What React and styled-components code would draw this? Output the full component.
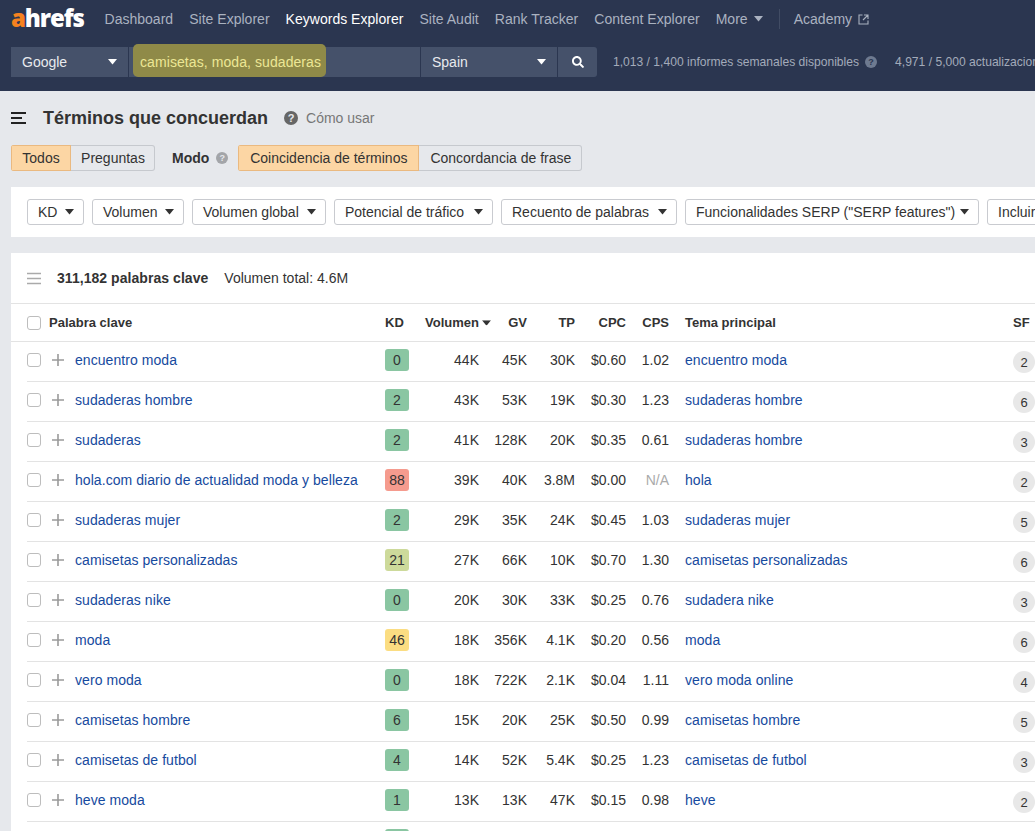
import styled, { createGlobalStyle } from "styled-components"
import { FaSearch } from "react-icons/fa"

const GlobalStyle = createGlobalStyle`
  html, body {
    margin: 0;
    height: 831px;
    overflow: hidden;
    background: #e6e8ec;
    font-family: "Liberation Sans", Arial, sans-serif;
    font-size: 14px;
    color: #333;
  }
  * { box-sizing: border-box; }
`

const navItems = [
  { label: "Dashboard" },
  { label: "Site Explorer" },
  { label: "Keywords Explorer", active: true },
  { label: "Site Audit" },
  { label: "Rank Tracker" },
  { label: "Content Explorer" },
]

const filters = [
  { name: "KD", width: 57 },
  { name: "Volumen", width: 92 },
  { name: "Volumen global", width: 134 },
  { name: "Potencial de tráfico", width: 159 },
  { name: "Recuento de palabras", width: 176 },
  { name: 'Funcionalidades SERP ("SERP features")', width: 294 },
]

const kdColors = {
  green: "#8ac6a2",
  lime: "#cdda9b",
  yellow: "#fbdd82",
  red: "#f59b8e",
}

const rows = [
  ["encuentro moda", 0, "green", "44K", "45K", "30K", "$0.60", "1.02", "encuentro moda", 2],
  ["sudaderas hombre", 2, "green", "43K", "53K", "19K", "$0.30", "1.23", "sudaderas hombre", 6],
  ["sudaderas", 2, "green", "41K", "128K", "20K", "$0.35", "0.61", "sudaderas hombre", 3],
  ["hola.com diario de actualidad moda y belleza", 88, "red", "39K", "40K", "3.8M", "$0.00", "N/A", "hola", 2],
  ["sudaderas mujer", 2, "green", "29K", "35K", "24K", "$0.45", "1.03", "sudaderas mujer", 5],
  ["camisetas personalizadas", 21, "lime", "27K", "66K", "10K", "$0.70", "1.30", "camisetas personalizadas", 6],
  ["sudaderas nike", 0, "green", "20K", "30K", "33K", "$0.25", "0.76", "sudadera nike", 3],
  ["moda", 46, "yellow", "18K", "356K", "4.1K", "$0.20", "0.56", "moda", 6],
  ["vero moda", 0, "green", "18K", "722K", "2.1K", "$0.04", "1.11", "vero moda online", 4],
  ["camisetas hombre", 6, "green", "15K", "20K", "25K", "$0.50", "0.99", "camisetas hombre", 5],
  ["camisetas de futbol", 4, "green", "14K", "52K", "5.4K", "$0.25", "1.23", "camisetas de futbol", 3],
  ["heve moda", 1, "green", "13K", "13K", "47K", "$0.15", "0.98", "heve", 2],
]

function Caret({ size = 9, color = "currentColor" }) {
  return (
    <svg width={size} height={size * 0.6} viewBox="0 0 10 6">
      <path d="M0 0h10L5 6z" fill={color} />
    </svg>
  )
}

function Plus() {
  return (
    <svg width="12" height="12" viewBox="0 0 12 12">
      <path d="M6 0v12M0 6h12" stroke="#9a9a9a" strokeWidth="1.6" />
    </svg>
  )
}

export default function App() {
  return (
    <>
      <GlobalStyle />
      <Header>
        <TopBar>
          <Logo><span>a</span>hrefs</Logo>
          <Nav>
            {navItems.map((item) => (
              <NavLink key={item.label} $active={item.active}>{item.label}</NavLink>
            ))}
            <NavLink>More <Caret size={9} /></NavLink>
            <NavDivider />
            <NavLink>
              Academy
              <svg width="11" height="11" viewBox="0 0 11 11" fill="none" stroke="currentColor" strokeWidth="1.1">
                <path d="M4.5 1H1v9h9V6.5M6 1h4v4M10 1L5 6" />
              </svg>
            </NavLink>
          </Nav>
        </TopBar>
        <SearchBar>
          <SelectBox $width={117}>
            Google <Caret size={9} color="#fff" />
          </SelectBox>
          <QueryBox>
            <Highlight>camisetas, moda, sudaderas</Highlight>
          </QueryBox>
          <SelectBox $width={136}>
            Spain <Caret size={9} color="#fff" />
          </SelectBox>
          <SearchButton><FaSearch size={12} /></SearchButton>
          <Quota>1,013 / 1,400 informes semanales disponibles</Quota>
          <HelpDot $size={12} $bg="#6e7a90" $color="#2b3650">?</HelpDot>
          <QuotaSecond>4,971 / 5,000 actualizaciones</QuotaSecond>
        </SearchBar>
      </Header>

      <TitleRow>
        <svg width="15" height="12" viewBox="0 0 15 12">
          <path d="M0 1h15M0 6h11M0 11h15" stroke="#222" strokeWidth="2" />
        </svg>
        <Title>Términos que concuerdan</Title>
        <HelpDot $size={14} $bg="#666" $color="#e6e8ec">?</HelpDot>
        <HowTo>Cómo usar</HowTo>
      </TitleRow>

      <ModeRow>
        <Toggle>
          <ToggleItem $width={60} $on>Todos</ToggleItem>
          <ToggleItem $width={84}>Preguntas</ToggleItem>
        </Toggle>
        <ModeLabel>Modo</ModeLabel>
        <HelpDot $size={12} $bg="#a3a5a9" $color="#e6e8ec">?</HelpDot>
        <Toggle $offset={10}>
          <ToggleItem $width={181} $on>Coincidencia de términos</ToggleItem>
          <ToggleItem $width={163}>Concordancia de frase</ToggleItem>
        </Toggle>
      </ModeRow>

      <FilterPanel>
        {filters.map((f) => (
          <FilterButton key={f.name} $width={f.width}>{f.name} <Caret size={9} color="#333" /></FilterButton>
        ))}
        <FilterButton $width={60}>Incluir</FilterButton>
      </FilterPanel>

      <Card>
        <CardHead>
          <svg width="14" height="13" viewBox="0 0 14 13">
            <path d="M0 1.5h14M0 6.5h14M0 11.5h14" stroke="#aaa" strokeWidth="1.6" />
          </svg>
          <Count>311,182 palabras clave</Count>
          <Total>Volumen total: 4.6M</Total>
        </CardHead>

        <HeadRow>
          <Checkbox />
          <HeadCell>Palabra clave</HeadCell>
          <HeadCell>KD</HeadCell>
          <HeadCell $right>Volumen<SortMark><Caret size={9} color="#333" /></SortMark></HeadCell>
          <HeadCell $right>GV</HeadCell>
          <HeadCell $right>TP</HeadCell>
          <HeadCell $right>CPC</HeadCell>
          <HeadCell $right>CPS</HeadCell>
          <HeadCell $topic>Tema principal</HeadCell>
          <HeadCell>SF</HeadCell>
        </HeadRow>

        {rows.map((r) => (
          <Row key={r[0]}>
            <Checkbox />
            <Plus />
            <KeywordLink>{r[0]}</KeywordLink>
            <KdBadge $bg={kdColors[r[2]]}>{r[1]}</KdBadge>
            <Num>{r[3]}</Num>
            <Num>{r[4]}</Num>
            <Num>{r[5]}</Num>
            <Num>{r[6]}</Num>
            <Num $muted={r[7] === "N/A"}>{r[7]}</Num>
            <TopicLink>{r[8]}</TopicLink>
            <SfBadge>{r[9]}</SfBadge>
          </Row>
        ))}
        <Row>
          <span />
          <span />
          <span />
          <KdBadge $bg={kdColors.green} />
        </Row>
      </Card>
    </>
  )
}

const Header = styled.header`
  height: 91px;
  background: #2b3650;
  padding: 0 0 0 11px;
  white-space: nowrap;
  overflow: hidden;
`
const TopBar = styled.div`
  display: flex;
  align-items: center;
  height: 38px;
`
const Logo = styled.div`
  width: 93.5px;
  font-family: "Open Sans", sans-serif;
  font-size: 24px;
  font-weight: 800;
  letter-spacing: -1.1px;
  color: #fff;
  line-height: 1;
  margin-top: -3px;
  span { color: #f58220; }
`
const Nav = styled.nav`
  display: flex;
  align-items: center;
  gap: 16px;
`
const NavLink = styled.a`
  display: inline-flex;
  align-items: center;
  gap: 6px;
  font-size: 14px;
  letter-spacing: 0.02px;
  color: ${(p) => (p.$active ? "#fff" : "#aab2c0")};
`
const NavDivider = styled.div`
  width: 1px;
  height: 20px;
  margin: 0 -2px 0 0;
  background: #414c64;
`
const SearchBar = styled.div`
  display: flex;
  align-items: center;
  height: 30px;
  margin-top: 9px;
`
const SelectBox = styled.div`
  display: flex;
  align-items: center;
  justify-content: space-between;
  flex: none;
  width: ${(p) => p.$width}px;
  height: 30px;
  padding: 0 11px;
  margin-right: 1px;
  background: #45516a;
  color: #e8eaee;
  font-size: 14px;
`
const QueryBox = styled.div`
  position: relative;
  flex: none;
  width: 291px;
  height: 30px;
  margin-right: 1px;
  background: #45516a;
`
const Highlight = styled.div`
  position: absolute;
  left: 4px;
  top: -3.5px;
  width: 193px;
  height: 33.5px;
  padding: 3.5px 0 0 7px;
  line-height: 30px;
  border-radius: 5px;
  background: #8f8a48;
  color: #ece795;
  font-size: 14px;
  letter-spacing: 0.08px;
`
const SearchButton = styled.div`
  display: flex;
  align-items: center;
  justify-content: center;
  flex: none;
  width: 39px;
  height: 30px;
  background: #45516a;
  color: #fff;
  border-radius: 0 3px 3px 0;
`
const Quota = styled.span`
  margin-left: 16px;
  margin-right: 6px;
  font-size: 12.1px;
  color: #a3abba;
`
const QuotaSecond = styled(Quota)`
  margin-left: 18px;
  margin-right: 0;
`
const HelpDot = styled.span`
  display: inline-flex;
  align-items: center;
  justify-content: center;
  flex: none;
  width: ${(p) => p.$size}px;
  height: ${(p) => p.$size}px;
  border-radius: 50%;
  background: ${(p) => p.$bg};
  color: ${(p) => p.$color};
  font-size: ${(p) => p.$size - 3}px;
  font-weight: 700;
`
const TitleRow = styled.div`
  display: flex;
  align-items: center;
  height: 54px;
  padding-left: 11px;
`
const Title = styled.h1`
  margin: 0 16px 0 17px;
  font-size: 18px;
  font-weight: 700;
  color: #333;
`
const HowTo = styled.span`
  margin-left: 8px;
  color: #777;
  font-size: 14px;
`
const ModeRow = styled.div`
  display: flex;
  align-items: center;
  height: 26px;
  padding-left: 11px;
`
const Toggle = styled.div`
  display: flex;
  height: 26px;
  margin-left: ${(p) => p.$offset || 0}px;
  border-radius: 3px;
  overflow: hidden;
  box-shadow: inset 0 0 0 1px #c6c9ce;
`
const ToggleItem = styled.div`
  display: flex;
  align-items: center;
  justify-content: center;
  width: ${(p) => p.$width}px;
  font-size: 14px;
  color: #333;
  background: ${(p) => (p.$on ? "#fcd6a4" : "transparent")};
  ${(p) => p.$on && "box-shadow: inset 0 0 0 1px #eab980;"}
`
const ModeLabel = styled.span`
  margin: 0 7px 0 17px;
  font-weight: 700;
  font-size: 14px;
`
const FilterPanel = styled.div`
  display: flex;
  align-items: center;
  gap: 8px;
  height: 50px;
  margin: 16px 0 0 11px;
  padding-left: 16px;
  background: #fff;
  overflow: hidden;
  white-space: nowrap;
`
const FilterButton = styled.button`
  display: inline-flex;
  align-items: center;
  justify-content: space-between;
  flex: none;
  width: ${(p) => p.$width}px;
  height: 26px;
  padding: 0 9px 0 10px;
  border: 1px solid #c9cbd0;
  border-radius: 3px;
  background: #fff;
  color: #333;
  font-family: inherit;
  font-size: 14px;
`
const Card = styled.section`
  margin: 16px 0 0 11px;
  background: #fff;
`
const CardHead = styled.div`
  display: flex;
  align-items: center;
  height: 51px;
  padding-left: 16px;
  border-bottom: 1px solid #e3e3e3;
`
const Count = styled.strong`
  margin: 0 16px;
  font-size: 14px;
  letter-spacing: 0.05px;
`
const Total = styled.span`
  font-size: 14px;
`
const HeadRow = styled.div`
  display: grid;
  grid-template-columns: 22px 336px 24px 70px 48px 48px 51px 43px 344px 40px;
  align-items: center;
  height: 38px;
  padding-left: 16px;
  border-bottom: 1px solid #e3e3e3;
  white-space: nowrap;
`
const HeadCell = styled.div`
  position: relative;
  display: flex;
  align-items: center;
  justify-content: ${(p) => (p.$right ? "flex-end" : "flex-start")};
  padding-left: ${(p) => (p.$topic ? "16px" : "0")};
  font-size: 13px;
  font-weight: 700;
  color: #333;
`
const SortMark = styled.span`
  position: absolute;
  right: -12px;
  top: 50%;
  display: flex;
  transform: translateY(-50%);
`
const Row = styled.div`
  display: grid;
  grid-template-columns: 25px 23px 310px 24px 70px 48px 48px 51px 43px 344px 40px;
  align-items: center;
  height: 40px;
  padding-bottom: 4px;
  margin-left: 16px;
  border-bottom: 1px solid #e3e3e3;
  white-space: nowrap;
`
const Checkbox = styled.span`
  display: block;
  width: 14px;
  height: 14px;
  border: 1px solid #bdbdbd;
  border-radius: 3px;
  background: #fff;
`
const KeywordLink = styled.a`
  color: #164a9e;
  font-size: 14px;
  letter-spacing: 0.06px;
`
const TopicLink = styled(KeywordLink)`
  padding-left: 16px;
`
const KdBadge = styled.span`
  display: flex;
  align-items: center;
  justify-content: center;
  width: 24px;
  height: 22px;
  margin-top: 1px;
  border-radius: 3px;
  background: ${(p) => p.$bg};
  font-size: 14px;
  color: #333;
`
const Num = styled.span`
  text-align: right;
  font-size: 14px;
  color: ${(p) => (p.$muted ? "#aaa" : "#333")};
`
const SfBadge = styled.span`
  display: flex;
  align-items: center;
  justify-content: center;
  width: 22px;
  height: 22px;
  margin-top: 5px;
  border-radius: 50%;
  background: #e8e8e8;
  font-size: 13px;
  color: #333;
`
